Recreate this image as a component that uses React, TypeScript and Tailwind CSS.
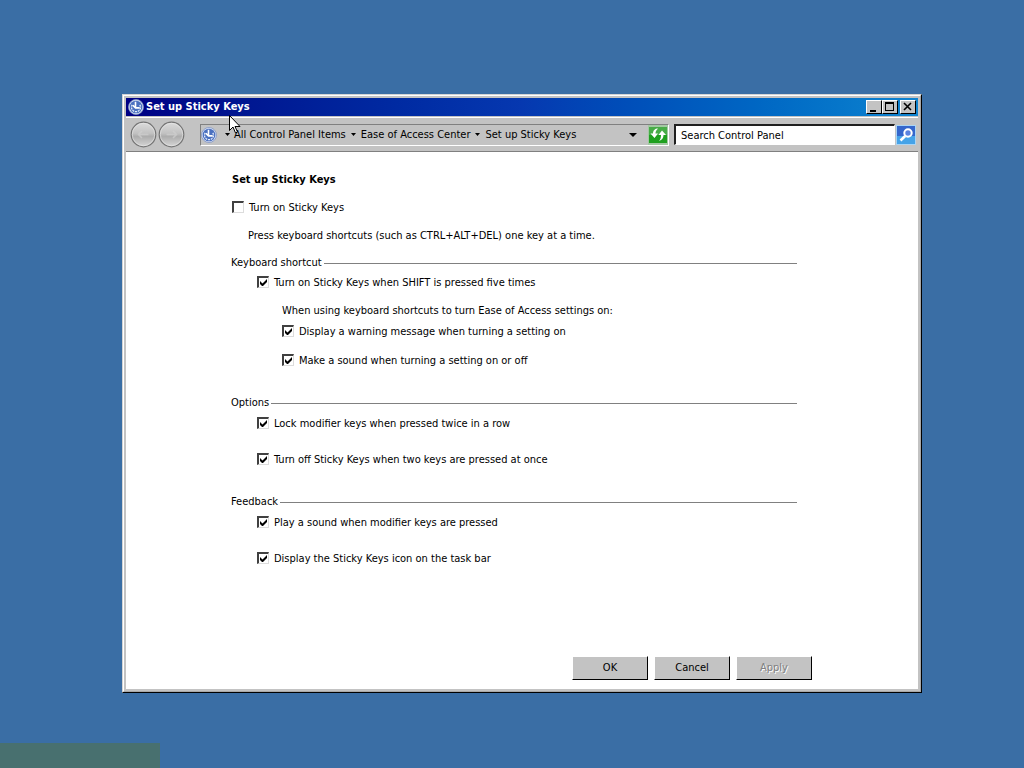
import React from "react";

const face = "border border-t-white border-l-white border-b-black border-r-black bg-[#c3c3c3]";

function EaseIcon() {
  return (
    <svg viewBox="0 0 16 16" className="h-4 w-4 shrink-0" aria-hidden="true">
      <circle cx="8" cy="8" r="7.5" fill="#d5def2" stroke="#8295c4" strokeWidth="0.8" />
      <circle cx="8" cy="8" r="6.3" fill="#4a70c0" />
      <path d="M4.200 5.800a4.500 4.500 0 1 0 7.600 0" fill="none" stroke="#e6edfb" strokeWidth="1.300" strokeDasharray="2 .8" />
      <path d="M7.500 2.800v6M4.800 6.200l2.700 2.700h4.200" fill="none" stroke="#fff" strokeWidth="1.600" />
    </svg>
  );
}

function Arrow() {
  return (
    <svg viewBox="0 0 5 3" className="h-[3px] w-[5px]" aria-hidden="true">
      <path d="M0 0h5L2.500 3z" fill="#000" />
    </svg>
  );
}

function NavButton({ label, back }: { label: string; back?: boolean }) {
  return (
    <button aria-label={label} className="h-[27px] w-[27px]">
      <svg viewBox="0 0 27 27" className="h-full w-full" aria-hidden="true">
        <defs>
          <linearGradient id={back ? "nb" : "nf"} x1="0" y1="0" x2="0" y2="1">
            <stop offset="0" stopColor="#dcdcdc" />
            <stop offset="0.45" stopColor="#c2c2c2" />
            <stop offset="0.58" stopColor="#adadad" />
            <stop offset="1" stopColor="#d6d6d6" />
          </linearGradient>
        </defs>
        <circle cx="13.5" cy="13.5" r="12.3" fill={back ? "url(#nb)" : "url(#nf)"} stroke="#747474" strokeWidth="1.200" />
        <circle cx="13.5" cy="13.5" r="11.200" fill="none" stroke="#e8e8e8" strokeOpacity=".6" />
        <path
          d={back ? "M8.500 13.500h10M12 10l-3.500 3.500 3.500 3.500" : "M8.500 13.500h10M15 10l3.500 3.500-3.500 3.500"}
          fill="none" stroke="#d0d0d0" strokeOpacity=".7" strokeWidth="1.600"
        />
      </svg>
    </button>
  );
}

function Check({ id, label, checked }: { id: string; label: string; checked?: boolean }) {
  return (
    <div className="flex h-4 items-start gap-[5px]">
      <span className="relative mt-px flex h-3 w-3">
        <input
          id={id} type="checkbox" defaultChecked={checked}
          className="peer h-3 w-3 appearance-none border-t-2 border-r border-b border-l-2 border-t-[#404040] border-l-[#404040] border-r-[#dcdcdc] border-b-[#dcdcdc] bg-white"
        />
        <svg viewBox="0 0 7 7" className="pointer-events-none absolute top-[3px] left-[3px] hidden h-[7px] w-[7px] peer-checked:block" aria-hidden="true">
          <path d="M0 2v3l2 2h1l4-4V0L2.500 4.500z" fill="#000" />
        </svg>
      </span>
      <label htmlFor={id}>{label}</label>
    </div>
  );
}

function Heading({ children }: { children: React.ReactNode }) {
  return (
    <h2 className="flex h-4 items-center gap-[2px]">
      {children}
      <span className="h-px flex-1 bg-[#808080]" />
    </h2>
  );
}

function Crumb({ children }: { children: React.ReactNode }) {
  return <a href="#" className="whitespace-nowrap">{children}</a>;
}

export default function App() {
  return (
    <div className="relative flex h-screen min-h-[680px] bg-[#3a6ea5] pt-[94px] pr-[102px] pb-[75px] pl-[122px] font-['DejaVu_Sans_Condensed','DejaVu_Sans',sans-serif] text-[11px] leading-4 text-black">
      <main className="flex flex-1 flex-col border border-t-[#d4d4d4] border-r-black border-b-black border-l-[#d4d4d4] bg-[#c3c3c3]">
        <div className="flex flex-1 flex-col border border-t-white border-r-[#a8a8a8] border-b-[#a8a8a8] border-l-white p-[2px]">
          <header className="flex h-[18px] items-center gap-[2px] bg-linear-to-r from-[#000084] via-[#0638b0] to-[#1084d0] pr-[2px] pl-[2px] text-white">
            <EaseIcon />
            <h1 className="flex-1 font-bold">Set up Sticky Keys</h1>
            <button aria-label="Minimize" className={`${face} h-[14px] w-4`}>
              <svg viewBox="0 0 14 12" className="h-3 w-[14px]" aria-hidden="true"><path d="M3 9h6v2H3z" fill="#000" /></svg>
            </button>
            <button aria-label="Maximize" className={`${face} -ml-[2px] h-[14px] w-4`}>
              <svg viewBox="0 0 14 12" className="h-3 w-[14px]" aria-hidden="true"><path d="M2 1h9v9H2zM3 3v6h7V3z" fill="#000" fillRule="evenodd" /></svg>
            </button>
            <button aria-label="Close" className={`${face} h-[14px] w-4`}>
              <svg viewBox="0 0 14 12" className="h-3 w-[14px]" aria-hidden="true"><path d="M3 2l7 7M10 2L3 9" stroke="#000" strokeWidth="1.600" /></svg>
            </button>
          </header>
          <nav className="mt-px flex h-[35px] items-center gap-[5px] border-t border-b border-t-white border-b-[#808080] pr-[2px] pl-1">
            <div className="flex gap-px">
              <NavButton label="Back" back />
              <NavButton label="Forward" />
            </div>
            <div className="ml-[10px] flex h-[22px] flex-1 items-center border border-t-[#808080] border-r-white border-b-white border-l-[#808080]">
              <EaseIcon />
              <span className="mr-1 ml-2"><Arrow /></span>
              <Crumb>All Control Panel Items</Crumb>
              <span className="mx-[5px]"><Arrow /></span>
              <Crumb>Ease of Access Center</Crumb>
              <span className="mx-[5px]"><Arrow /></span>
              <Crumb>Set up Sticky Keys</Crumb>
              <button aria-label="Previous locations" className="mr-[11px] ml-auto">
                <svg viewBox="0 0 8 4" className="h-1 w-2" aria-hidden="true"><path d="M0 0h8L4 4z" fill="#000" /></svg>
              </button>
              <button aria-label="Refresh" className="h-5 w-5">
                <svg viewBox="0 0 20 20" className="h-5 w-5" aria-hidden="true">
                  <path d="M0 0h20v20H0z" fill="#a3c8a3" />
                  <path d="M1 2h18v16H1z" fill="#48ac48" />
                  <path d="M1 10h18v8H1z" fill="#1fa01f" />
                  <path d="M10 3.500C7 3.500 5 5.500 5 8.500H2.500L6.500 13 10 8.500H7.500C7.500 6.500 8.500 5 10 3.500zM11 16c3-1 4.500-3 4.500-6H18L14 5.500 10.500 10H13c0 2.500-.5 4.500-2 6z" fill="#fff" />
                </svg>
              </button>
            </div>
            <input aria-label="Search" defaultValue="Search Control Panel" className="h-[21px] w-[221px] border-t-2 border-r border-b border-l-2 border-t-[#202020] border-r-white border-b-white border-l-[#202020] bg-white pl-[5px] outline-none" />
            <button aria-label="Search" className="-ml-[4px] h-5 w-5">
              <svg viewBox="0 0 20 20" className="h-5 w-5" aria-hidden="true">
                <path d="M0 0h20v20H0z" fill="#a9d4f4" />
                <path d="M1 1h18v18H1z" fill="#3466cc" />
                <path d="M1 11h18v8H1z" fill="#45a3e8" />
                <circle cx="12" cy="8" r="3.700" fill="#5b83e0" stroke="#fff" strokeWidth="2" />
                <path d="M9.200 11L4.500 15.500" stroke="#fff" strokeWidth="2.600" />
              </svg>
            </button>
          </nav>
          <section className="flex flex-1 flex-col bg-white pt-5 pr-[106px] pb-[9px] pl-[105px]">
            <div className="pr-[15px]">
              <h2 className="pl-px font-bold">Set up Sticky Keys</h2>
              <div className="mt-3 pl-px"><Check id="on" label="Turn on Sticky Keys" /></div>
              <p className="mt-3 pl-[17px]">Press keyboard shortcuts (such as CTRL+ALT+DEL) one key at a time.</p>
              <div className="mt-[11px]"><Heading>Keyboard shortcut</Heading></div>
              <div className="mt-1 pl-[26px]">
                <Check id="shift" label="Turn on Sticky Keys when SHIFT is pressed five times" checked />
                <div className="pl-[25px]">
                  <p className="mt-3">When using keyboard shortcuts to turn Ease of Access settings on:</p>
                  <div className="mt-[5px] flex flex-col gap-[13px]">
                    <Check id="warn" label="Display a warning message when turning a setting on" checked />
                    <Check id="sound" label="Make a sound when turning a setting on or off" checked />
                  </div>
                </div>
              </div>
              <div className="mt-[26px]"><Heading>Options</Heading></div>
              <div className="mt-[5px] flex flex-col gap-5 pl-[26px]">
                <Check id="lock" label="Lock modifier keys when pressed twice in a row" checked />
                <Check id="off" label="Turn off Sticky Keys when two keys are pressed at once" checked />
              </div>
              <div className="mt-[26px]"><Heading>Feedback</Heading></div>
              <div className="mt-[5px] flex flex-col gap-5 pl-[26px]">
                <Check id="play" label="Play a sound when modifier keys are pressed" checked />
                <Check id="icon" label="Display the Sticky Keys icon on the task bar" checked />
              </div>
            </div>
            <div className="mt-auto flex justify-end gap-[6px]">
              <button className={`${face} h-6 w-[76px]`}>OK</button>
              <button className={`${face} h-6 w-[76px]`}>Cancel</button>
              <button disabled className={`${face} h-6 w-[76px] text-[#808080] [text-shadow:1px_1px_0_#fff]`}>Apply</button>
            </div>
          </section>
        </div>
      </main>
      <div className="absolute bottom-0 left-0 h-[25px] w-40 bg-[#48706f]" />
      <svg viewBox="0 0 12 19" className="absolute top-[115px] left-[229px] h-[19px] w-3" aria-hidden="true">
        <path d="M.5.5v15l3.500-3.500 2.500 6 2-1-2.500-5.500h5z" fill="#fff" stroke="#000" />
      </svg>
    </div>
  );
}
